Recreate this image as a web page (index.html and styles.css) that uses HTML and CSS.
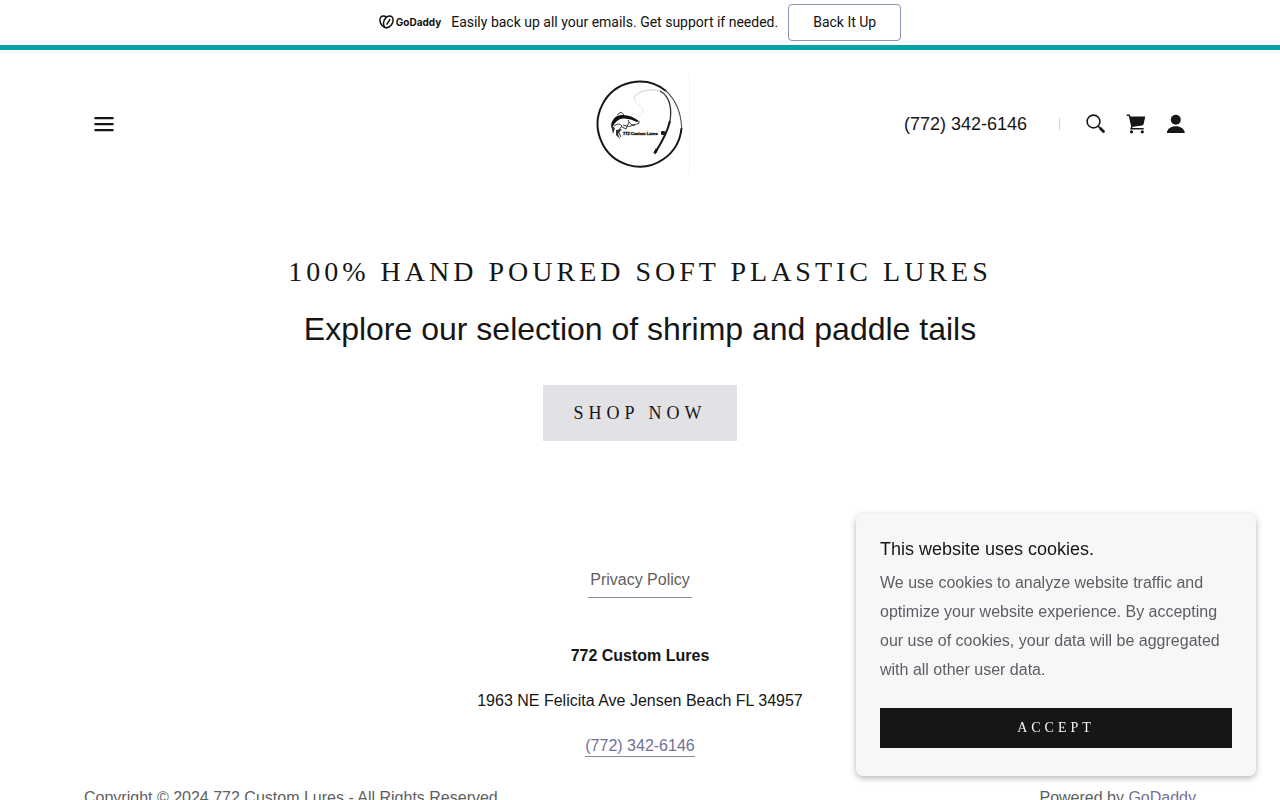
FILE: index.html
```html
<!DOCTYPE html>
<html lang="en">
<head>
<meta charset="utf-8">
<meta name="viewport" content="width=device-width, initial-scale=1">
<title>772 Custom Lures</title>
<link rel="stylesheet" href="styles.css">
</head>
<body>
<aside class="promo">
  <span class="promo-brand">
    <svg class="promo-mark" viewBox="0 0 15 14" aria-hidden="true"><g fill="none" stroke="#111" stroke-width="1.500" stroke-linecap="round"><path d="M7.500 12.800C3.500 12 0.800 8.500 0.900 5C1 2.500 2.500 1 4.600 1C5.600 1 6.600 1.400 7.500 2.100"/><path d="M7.500 12.800C11.500 12 14.200 8.500 14.100 5C14 2.500 12.500 1 10.400 1C7.500 1 4.700 4.600 4.500 8C4.400 9.400 4.700 10.400 5.300 11.200"/><path d="M10.800 4.600L8 9.200"/></g></svg>
    <span class="promo-name">GoDaddy</span>
  </span>
  <span class="promo-text">Easily back up all your emails. Get support if needed.</span>
  <a class="promo-button" href="#backup">Back It Up</a>
</aside>

<header class="header">
  <button class="icon-button menu" type="button" aria-label="Menu">
    <svg viewBox="0 0 24 24" width="24" height="24"><path fill="#161616" d="M2.500 5h19v2.300H2.500zM2.500 11h19v2.300H2.500zM2.500 17h19v2.300H2.500z"/></svg>
  </button>
  <a class="logo" href="#home" aria-label="772 Custom Lures">
    <svg viewBox="0 0 100 100" width="100" height="100">
      <path d="M99.500 0V100" stroke="#f2f2f2"/>
      <path d="M76 17A42 42.500 0 1 0 91.500 54" fill="none" stroke="#161616" stroke-width="2"/>
      <path d="M75 16Q91 30 91.700 55" fill="none" stroke="#555" stroke-width="1.100"/>
      <path d="M44 24C47 16 65 13 74 19" fill="none" stroke="#bbb" stroke-width="0.800"/>
      <path d="M44 24C45 31 54 32 53 38Q52 42 46 44" fill="none" stroke="#e0e0e0" stroke-width="0.800"/>
      <path d="M70 17C80 22 83 36 79 51" fill="none" stroke="#333" stroke-width="1.300"/>
      <path d="M80 47Q77 60 65 79" fill="none" stroke="#161616" stroke-width="2"/>
      <path d="M67 75L64.500 79.500" stroke="#111" stroke-width="2.600"/>
      <path d="M21 52Q22 42 31 41Q40 40 49 47L47 48Q40 44 33 44.500Q26 45 22 54Z" fill="#111"/>
      <path d="M27 41L31 38L34 41M49 47Q50 50 47 50L42 51Q39 49 38 46M45 51Q38 54 33 51M24 52Q29 48 32 52L28 57L31 63M32 53L36 55L39 48" fill="none" stroke="#222" stroke-width="0.900"/>
      <path d="M21 51L25 54L23 60ZM26 56L32 55L28 60L30 65L26 61Z" fill="#333"/>
      <text class="logo-text" x="33" y="61">772 Custom Lures</text>
      <rect x="71" y="57" width="4" height="4" rx="1" fill="#222"/>
    </svg>
  </a>
  <div class="tools">
    <a class="phone" href="tel:7723426146">(772) 342-6146</a>
    <span class="divider"></span>
    <div class="icons">
      <button class="icon-button" type="button" aria-label="Search">
        <svg viewBox="0 0 24 24" width="24" height="24"><circle cx="9.500" cy="9.500" r="6.400" fill="none" stroke="#161616" stroke-width="1.600"/><path d="M14 14L16 16" stroke="#161616" stroke-width="1.600"/><path d="M16.500 16.500L19.500 19.500" stroke="#161616" stroke-width="2.800" stroke-linecap="round"/></svg>
      </button>
      <button class="icon-button" type="button" aria-label="Shopping cart">
        <svg viewBox="0 0 24 24" width="24" height="24"><g fill="#161616"><path d="M5.500 4.500H21.300L19.600 12Q19.300 13.300 18 13.500L7.500 15Z"/><circle cx="7.500" cy="19.800" r="1.600"/><circle cx="18.300" cy="19.800" r="1.600"/></g><path d="M2.700 3.300H5.300L8 14.500L7 16.800H19.700" fill="none" stroke="#161616" stroke-width="1.400"/></svg>
      </button>
      <button class="icon-button" type="button" aria-label="Account">
        <svg viewBox="0 0 24 24" width="24" height="24"><g fill="#161616"><circle cx="11.800" cy="7.700" r="5"/><path d="M2.800 21C3.500 16.500 7 14.300 11.800 14.300S20.100 16.500 20.800 21Z"/></g></svg>
      </button>
    </div>
  </div>
</header>

<main class="hero">
  <h1 class="title">100% Hand Poured Soft Plastic Lures</h1>
  <p class="subtitle">Explore our selection of shrimp and paddle tails</p>
  <a class="shop" href="#shop">Shop Now</a>
</main>

<footer class="footer">
  <a class="privacy" href="#privacy">Privacy Policy</a>
  <div class="contact">
    <strong>772 Custom Lures</strong>
    <span>1963 NE Felicita Ave Jensen Beach FL 34957</span>
    <a class="contact-phone" href="tel:7723426146">(772) 342-6146</a>
  </div>
  <div class="legal">
    <span>Copyright © 2024 772 Custom Lures - All Rights Reserved.</span>
    <span>Powered by <a class="powered" href="#godaddy">GoDaddy</a></span>
  </div>
</footer>

<section class="cookies" aria-labelledby="cookies-title">
  <h2 class="cookies-title" id="cookies-title">This website uses cookies.</h2>
  <p class="cookies-text">We use cookies to analyze website traffic and optimize your website experience. By accepting our use of cookies, your data will be aggregated with all other user data.</p>
  <button class="accept" type="button">Accept</button>
</section>
</body>
</html>
```

FILE: styles.css
```css
* { box-sizing: border-box; }
body {
  margin: 0;
  background: #fff;
  color: #161616;
  font: 16px/29px "Liberation Sans", Arial, sans-serif;
}
a { color: inherit; text-decoration: none; }
h1, h2, p { margin: 0; font-weight: 400; }
svg { display: block; }

.promo {
  display: flex;
  justify-content: center;
  align-items: center;
  gap: 10px;
  height: 50px;
  border-bottom: 5px solid #00a4a6;
  color: #111;
  font: 14px/19px Roboto, sans-serif;
}
.promo-brand { display: flex; align-items: center; gap: 2px; padding-bottom: 2px; }
.promo-mark { width: 15px; height: 14px; }
.promo-name { font: 700 10px/14px Inter, sans-serif; }
.promo-button {
  padding: 8px 24px;
  border: 1px solid #8795b3;
  border-radius: 4px;
}

.header {
  display: grid;
  grid-template-columns: 1fr auto 1fr;
  align-items: center;
  max-width: 1160px;
  margin: 0 auto;
  padding: 24px 32px;
}
.icon-button { padding: 0; border: 0; background: none; cursor: pointer; }
.menu { justify-self: start; }
.logo-text { font: 700 4px "Liberation Sans", sans-serif; fill: #222; stroke: #222; stroke-width: 0.4; }
.tools { display: flex; justify-content: flex-end; align-items: center; }
.phone { font-size: 18px; }
.divider { width: 1px; height: 12px; margin: 0 24px 0 32px; background: #d0d0d4; }
.icons { display: flex; gap: 16px; }

.hero {
  display: flex;
  flex-direction: column;
  align-items: center;
  padding: 56px 24px 120px;
  text-align: center;
}
.title {
  font: 28px/35px "Liberation Serif", "Times New Roman", serif;
  letter-spacing: 4px;
  text-transform: uppercase;
}
.subtitle { margin-top: 16px; font-size: 32px; line-height: 48px; }
.shop {
  margin-top: 32px;
  padding: 0 31px;
  background: #e2e1e6;
  font: 18px/56px "Liberation Serif", "Times New Roman", serif;
  letter-spacing: 5px;
  text-transform: uppercase;
}

.footer {
  display: flex;
  flex-direction: column;
  align-items: center;
  max-width: 1160px;
  margin: 0 auto;
  padding: 0 24px 24px;
}
.privacy { padding: 4px 2px 3px; border-bottom: 1px solid #8b889c; color: #5e5e5e; }
.contact {
  display: flex;
  flex-direction: column;
  align-items: center;
  gap: 16px;
  margin-top: 43px;
}
.contact-phone { border-bottom: 1px solid #8b889c; color: #73709a; line-height: 20px; margin-top: 5px; }
.legal {
  display: flex;
  justify-content: space-between;
  align-self: stretch;
  margin-top: 26px;
  color: #5e5e5e;
}
.powered { color: #73709a; }

.cookies {
  position: fixed;
  right: 24px;
  bottom: 24px;
  width: 400px;
  padding: 20px 24px 28px;
  border-radius: 7px;
  background: #f7f7f7;
  box-shadow: 0 2px 6px rgba(0, 0, 0, 0.3);
}
.cookies-title { font-size: 18px; line-height: 30px; }
.cookies-text { margin: 4px 0 24px; color: #5e5d66; }
.accept {
  display: block;
  width: 100%;
  height: 40px;
  border: 0;
  background: #161616;
  color: #f7f7f7;
  font: 14px/20px "Liberation Serif", "Times New Roman", serif;
  letter-spacing: 4px;
  text-transform: uppercase;
}
```
